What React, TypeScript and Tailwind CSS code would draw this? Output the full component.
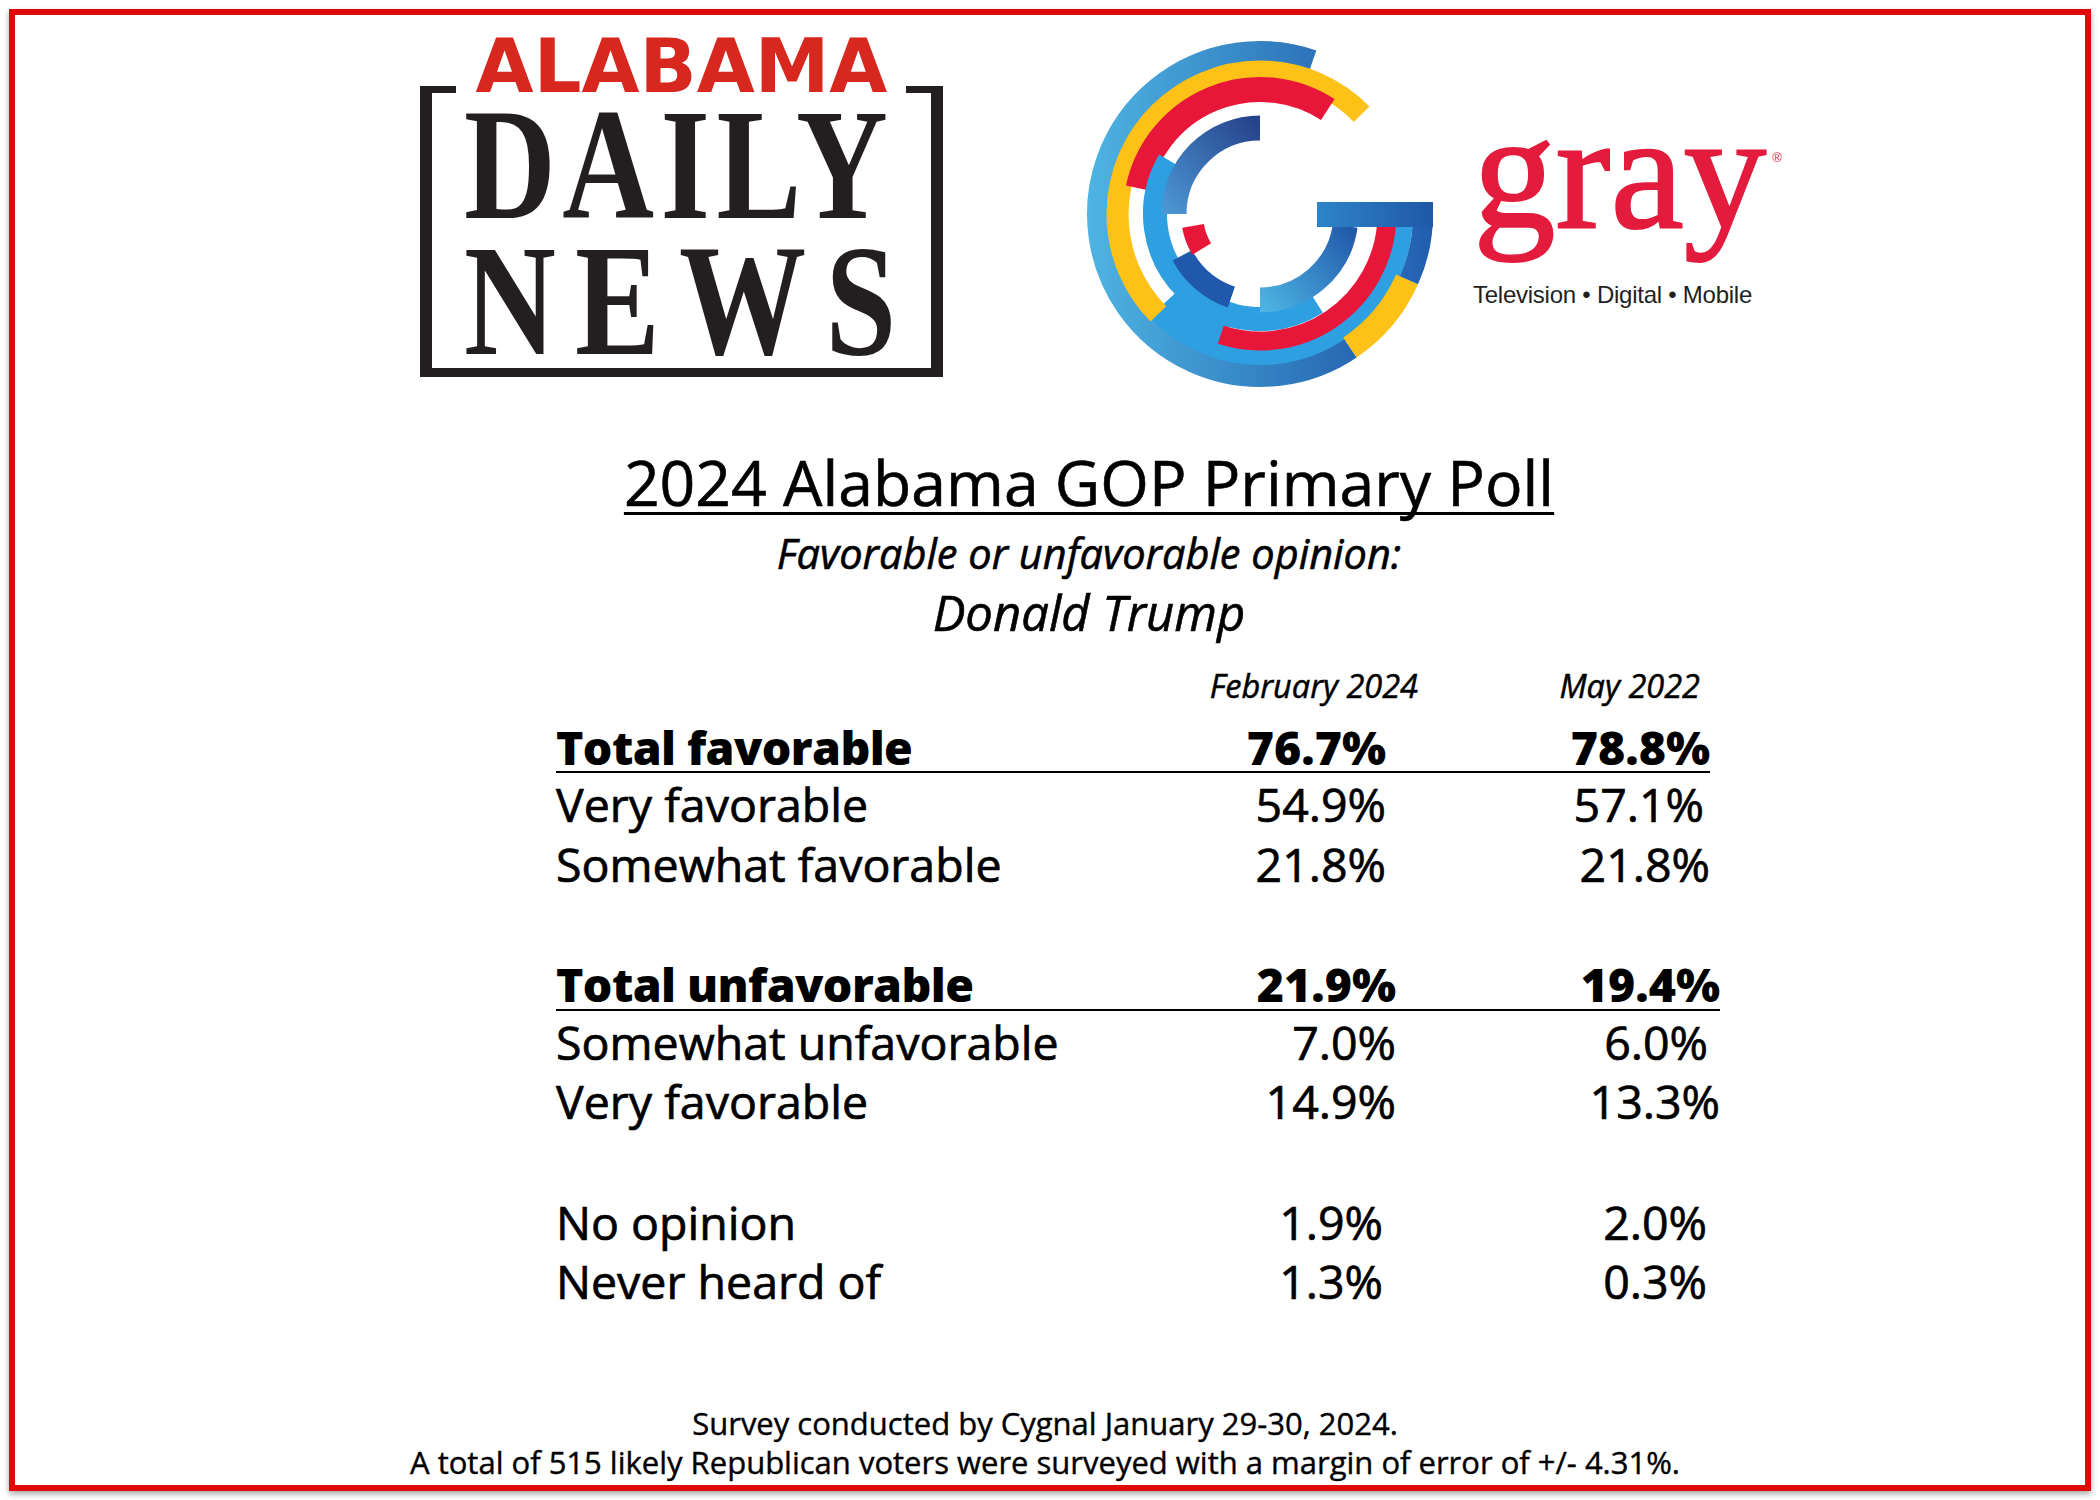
import clsx from 'clsx';

const CX = 180;
const CY = 179;

function arc(r: number, a0: number, a1: number) {
  const rad = (a: number) => (a * Math.PI) / 180;
  const x0 = CX + r * Math.cos(rad(a0));
  const y0 = CY + r * Math.sin(rad(a0));
  const x1 = CX + r * Math.cos(rad(a1));
  const y1 = CY + r * Math.sin(rad(a1));
  const large = Math.abs(a1 - a0) > 180 ? 1 : 0;
  const sweep = a1 > a0 ? 1 : 0;
  return `M${x0.toFixed(2)} ${y0.toFixed(2)} A${r} ${r} 0 ${large} ${sweep} ${x1.toFixed(2)} ${y1.toFixed(2)}`;
}

type Ring = { r: number; w: number; a0: number; a1: number; c: string };

// drawn in order, first one at the bottom
const rings: Ring[] = [
  { r: 124, w: 62, a0: 105, a1: 137, c: '#2e9fe0' },
  { r: 144, w: 18, a0: 0, a1: 137, c: '#2e9fe0' },
  { r: 162, w: 22, a0: 56, a1: 289, c: 'url(#gOuter)' },
  { r: 142.5, w: 22, a0: 135.5, a1: 315.5, c: '#fdc117' },
  { r: 161, w: 24, a0: 24, a1: 56, c: '#fdc117' },
  { r: 163, w: 20, a0: -4, a1: 24, c: 'url(#gStem)' },
  { r: 124.5, w: 25, a0: 192, a1: 303, c: '#e8173a' },
  { r: 105, w: 24, a0: 57.5, a1: 210.5, c: '#2e9fe0' },
  { r: 127, w: 19, a0: 4, a1: 108, c: '#e8173a' },
  { r: 86, w: 25, a0: 180, a1: 270, c: 'url(#gTop)' },
  { r: 86, w: 25, a0: 8, a1: 90, c: 'url(#gBot)' },
  { r: 88, w: 22, a0: 109, a1: 152, c: '#2059ab' },
  { r: 68, w: 22, a0: 149, a1: 170, c: '#e8173a' },
];

function GrayMark() {
  return (
    <svg width="360" height="360" viewBox="0 0 360 360" className="shrink-0">
      <defs>
        <linearGradient id="gOuter" x1="0" y1="0" x2="330" y2="0" gradientUnits="userSpaceOnUse">
          <stop offset="0" stopColor="#4fb6e4" />
          <stop offset="1" stopColor="#1f58a8" />
        </linearGradient>
        <linearGradient id="gStem" x1="300" y1="0" x2="360" y2="0" gradientUnits="userSpaceOnUse">
          <stop offset="0" stopColor="#2a72bd" />
          <stop offset="1" stopColor="#2059ab" />
        </linearGradient>
        <linearGradient id="gTop" x1="85" y1="180" x2="180" y2="95" gradientUnits="userSpaceOnUse">
          <stop offset="0" stopColor="#4d98d6" />
          <stop offset="1" stopColor="#26448c" />
        </linearGradient>
        <linearGradient id="gBot" x1="180" y1="265" x2="270" y2="190" gradientUnits="userSpaceOnUse">
          <stop offset="0" stopColor="#4cb2e2" />
          <stop offset="1" stopColor="#2158a9" />
        </linearGradient>
        <linearGradient id="gBar" x1="237" y1="0" x2="353" y2="0" gradientUnits="userSpaceOnUse">
          <stop offset="0" stopColor="#2e84c9" />
          <stop offset="1" stopColor="#1f58a8" />
        </linearGradient>
      </defs>
      {rings.map((g, i) => (
        <path key={i} d={arc(g.r, g.a0, g.a1)} stroke={g.c} strokeWidth={g.w} fill="none" />
      ))}
      <rect x="237" y="167" width="116" height="25" fill="url(#gBar)" />
    </svg>
  );
}

function DailyNewsLogo() {
  return (
    <div className="ml-[405px] mt-[14px] flex w-[523px] shrink-0 flex-col">
      <div className="text-center font-['DejaVu_Sans'] text-[75px] font-bold leading-none text-[#d8271f]">
        ALABAMA
      </div>
      <div className="-mt-[18px] h-[291px] border-x-[12px] border-b-[9px] border-[#231f20] text-[#231f20]">
        <div className="flex justify-between">
          <div className="h-[7px] w-[24px] bg-[#231f20]" />
          <div className="h-[7px] w-[25px] bg-[#231f20]" />
        </div>
        <div className="mt-[11px] h-[120px] pl-[32px] font-['Liberation_Serif'] text-[159px] font-bold leading-[120px] tracking-[8px]">
          <span className="inline-block origin-left scale-x-[0.8]">DAILY</span>
        </div>
        <div className="mt-[16px] h-[120px] pl-[32px] font-['Liberation_Serif'] text-[159px] font-bold leading-[120px] tracking-[24px]">
          <span className="inline-block origin-left scale-x-[0.8]">NEWS</span>
        </div>
      </div>
    </div>
  );
}

function GrayWordmark() {
  return (
    <div className="ml-[33px] mt-[74px] flex shrink-0 flex-col">
      <div className="flex items-start">
        <div className="font-['Liberation_Serif'] text-[165px] leading-none text-[#e31b3d] [-webkit-text-stroke:2px_#e31b3d]">
          gray
        </div>
        <div className="ml-[6px] mt-[62px] font-['Liberation_Sans'] text-[13px] leading-none text-[#e31b3d]">®</div>
      </div>
      <div className="mt-[29px] font-['Liberation_Sans'] text-[24px] leading-none tracking-[-0.25px] text-[#231f20]">
        Television • Digital • Mobile
      </div>
    </div>
  );
}

type Row = { label: string; a: string; b: string; head?: boolean; bPad?: string };

const groups: { width: string; rows: Row[] }[] = [
  {
    width: 'w-[1154px]',
    rows: [
      { label: 'Total favorable', a: '76.7%', b: '78.8%', head: true },
      { label: 'Very favorable', a: '54.9%', b: '57.1%', bPad: 'pr-[6px]' },
      { label: 'Somewhat favorable', a: '21.8%', b: '21.8%' },
    ],
  },
  {
    width: 'w-[1164px]',
    rows: [
      { label: 'Total unfavorable', a: '21.9%', b: '19.4%', head: true },
      { label: 'Somewhat unfavorable', a: '7.0%', b: '6.0%', bPad: 'pr-[12px]' },
      { label: 'Very favorable', a: '14.9%', b: '13.3%' },
    ],
  },
  {
    width: 'w-[1151px]',
    rows: [
      { label: 'No opinion', a: '1.9%', b: '2.0%' },
      { label: 'Never heard of', a: '1.3%', b: '0.3%' },
    ],
  },
];

function PollTable() {
  return (
    <div className="ml-[541px] flex flex-col font-['Open_Sans'] text-black">
      <div className="mt-[33px] flex w-[1144px] justify-end text-[32.5px] italic leading-none [-webkit-text-stroke:0.5px_#000]">
        <div className="w-[320px] text-right">February 2024</div>
        <div className="w-[282px] text-right">May 2022</div>
      </div>
      <div className="mt-[15px] flex flex-col text-[46.5px] leading-[59.5px]">
        {groups.map((group, gi) => (
          <div key={gi} className={clsx('flex flex-col', gi > 0 && 'mt-[61px]', group.width)}>
            {group.rows.map((row) => (
              <div
                key={row.label}
                className={clsx(
                  'flex',
                  row.head
                    ? 'mb-[2px] h-[55.5px] border-b-2 border-black font-extrabold'
                    : 'h-[59.5px] [-webkit-text-stroke:0.7px_#000]'
                )}
              >
                <div className={clsx('flex-1 whitespace-nowrap', row.head && 'tracking-[-0.6px]')}>{row.label}</div>
                <div className="w-[300px] text-right">{row.a}</div>
                <div className={clsx('w-[324px] text-right', row.bPad)}>{row.b}</div>
              </div>
            ))}
          </div>
        ))}
      </div>
    </div>
  );
}

export default function App() {
  return (
    <div className="h-[1500px] w-[2100px] bg-white p-[9px]">
      <div className="flex h-full flex-col border-[6px] border-[#df0b0b] shadow-[0_3px_6px_rgba(0,0,0,0.35)]">
        <div className="flex items-start">
          <DailyNewsLogo />
          <div className="ml-[137px] mt-[20px]">
            <GrayMark />
          </div>
          <GrayWordmark />
        </div>

        <div className="flex flex-col pl-[78px] text-center font-['Open_Sans'] text-black [-webkit-text-stroke:0.6px_#000]">
          <div className="mt-[56px] text-[62.5px] leading-none underline decoration-[3px] underline-offset-[6px] [text-decoration-skip-ink:none]">
            2024 Alabama GOP Primary Poll
          </div>
          <div className="mt-[19px] text-[41.5px] italic leading-none">Favorable or unfavorable opinion:</div>
          <div className="mt-[14px] text-[49px] italic leading-none">Donald Trump</div>
        </div>

        <PollTable />

        <div className="mt-[92px] pr-[10px] text-center font-['Open_Sans'] text-[31px] leading-[39px] text-black [-webkit-text-stroke:0.4px_#000]">
          <div>Survey conducted by Cygnal January 29-30, 2024.</div>
          <div>A total of 515 likely Republican voters were surveyed with a margin of error of +/- 4.31%.</div>
        </div>
      </div>
    </div>
  );
}
